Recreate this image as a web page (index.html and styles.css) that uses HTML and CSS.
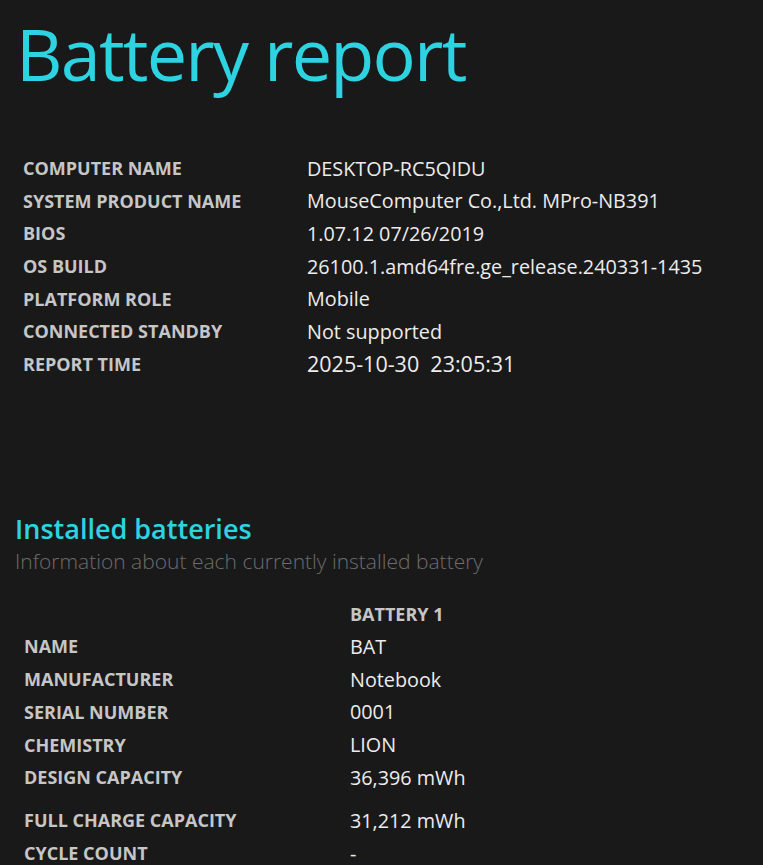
FILE: index.html
```html
<!DOCTYPE html>
<html>
<head>
<meta charset="utf-8">
<link rel="stylesheet" href="styles.css">
</head>
<body>
<h1 class="title">Battery report</h1>
<div class="info">
  <div class="row"><div class="label">COMPUTER NAME</div><div class="value">DESKTOP-RC5QIDU</div></div>
  <div class="row"><div class="label">SYSTEM PRODUCT NAME</div><div class="value">MouseComputer Co.,Ltd. MPro-NB391</div></div>
  <div class="row"><div class="label">BIOS</div><div class="value">1.07.12 07/26/2019</div></div>
  <div class="row"><div class="label">OS BUILD</div><div class="value">26100.1.amd64fre.ge_release.240331-1435</div></div>
  <div class="row"><div class="label">PLATFORM ROLE</div><div class="value">Mobile</div></div>
  <div class="row"><div class="label">CONNECTED STANDBY</div><div class="value">Not supported</div></div>
  <div class="row"><div class="label">REPORT TIME</div><div class="value strong">2025-10-30&nbsp;&nbsp;23:05:31</div></div>
</div>
<h2 class="section">Installed batteries</h2>
<div class="sub">Information about each currently installed battery</div>
<div class="bat">
  <div class="row"><div class="label"></div><div class="colhead">BATTERY 1</div></div>
  <div class="row"><div class="label">NAME</div><div class="value">BAT</div></div>
  <div class="row"><div class="label">MANUFACTURER</div><div class="value">Notebook</div></div>
  <div class="row"><div class="label">SERIAL NUMBER</div><div class="value">0001</div></div>
  <div class="row"><div class="label">CHEMISTRY</div><div class="value">LION</div></div>
  <div class="row"><div class="label">DESIGN CAPACITY</div><div class="value">36,396 mWh</div></div>
  <div class="row tall"><div class="label">FULL CHARGE CAPACITY</div><div class="value">31,212 mWh</div></div>
  <div class="row"><div class="label">CYCLE COUNT</div><div class="value">-</div></div>
</div>
</body>
</html>
```
FILE: styles.css
```css
html, body {
  margin: 0;
  padding: 0;
  background: #1a1919;
}
body {
  font-family: "Open Sans", "Noto Sans", sans-serif;
  color: #e6e6e6;
  overflow: hidden;
}
.title {
  margin: 0;
  padding: 5px 0 0 16px;
  font-size: 72px;
  font-weight: 400;
  line-height: 96px;
  color: #2dd3e1;
  letter-spacing: -1.8px;
}
.info {
  padding: 51px 0 0 23px;
}
.info .row {
  display: grid;
  grid-template-columns: 284px auto;
  align-items: center;
  height: 32.6px;
}
.label {
  font-size: 18px;
  font-weight: 700;
  color: #c6c6c6;
}
.value {
  font-size: 19.8px;
  font-weight: 400;
  color: #ececec;
}
.value.strong {
  font-size: 21.5px;
  font-weight: 500;
}
.section {
  margin: 0;
  padding: 132px 0 0 15px;
  font-size: 27px;
  font-weight: 600;
  line-height: 34px;
  color: #2dd3e1;
}
.sub {
  padding-left: 15px;
  font-size: 21px;
  font-weight: 300;
  line-height: 30px;
  color: #6c6c6c;
}
.bat {
  padding: 21px 0 0 24px;
}
.bat .row {
  display: grid;
  grid-template-columns: 326px auto;
  align-items: center;
  height: 32.75px;
}
.bat .row.tall {
  height: 43px;
  padding-top: 10px;
  box-sizing: border-box;
}
.colhead {
  font-size: 18px;
  font-weight: 700;
  color: #c6c6c6;
}
```
